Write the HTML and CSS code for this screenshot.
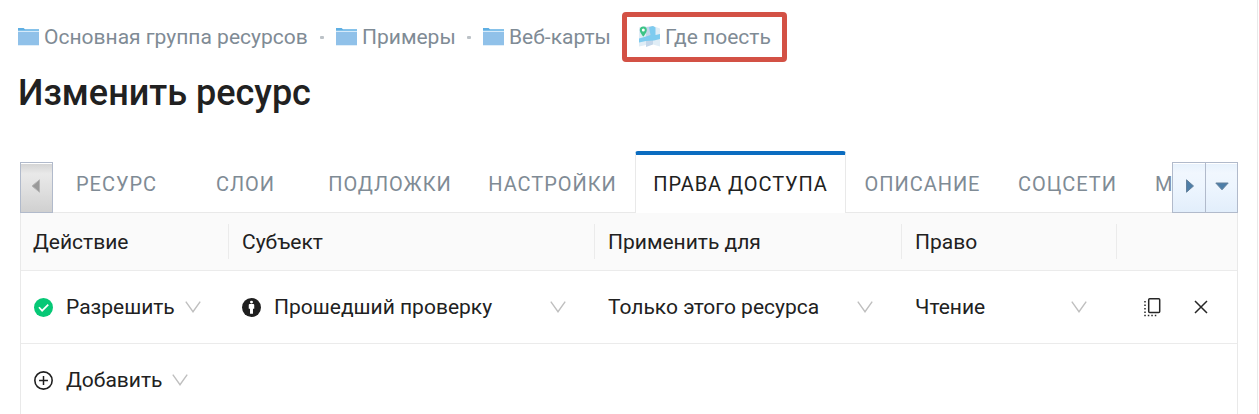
FILE: index.html
```html
<!DOCTYPE html>
<html lang="ru">
<head>
<meta charset="utf-8">
<title>Изменить ресурс</title>
<link rel="stylesheet" href="styles.css">
</head>
<body>
<svg class="defs" width="0" height="0">
  <symbol id="folder" viewBox="0 0 21 18">
    <path fill="#5fafe3" d="M0 0h5.6l1.4 1.2H21V6H0z"/>
    <path fill="#d5eafa" d="M0 2.7h21v1.4H0z"/>
    <path fill="#90c1e9" d="M0 4h21v13H0z"/>
    <path fill="#d3e7f7" d="M0 17h21v.7H0z"/>
  </symbol>
  <symbol id="chevron" viewBox="0 0 16 12">
    <path d="M.8.7 8 10.7 15.2.7" fill="none" stroke="#bfbfbf" stroke-width="1.4"/>
  </symbol>
</svg>
<div class="page">
  <nav class="crumbs">
    <a class="crumb crumb-root"><svg class="folder"><use href="#folder"/></svg><span>Основная группа ресурсов</span></a>
    <i class="dot"></i>
    <a class="crumb crumb-examples"><svg class="folder"><use href="#folder"/></svg><span>Примеры</span></a>
    <i class="dot"></i>
    <a class="crumb crumb-maps"><svg class="folder"><use href="#folder"/></svg><span>Веб-карты</span></a>
    <a class="crumb crumb-current">
      <svg class="map" viewBox="0 0 21 21">
        <path fill="#e0edf6" d="M0 1.500 7 0v19L0 20.500zM14 0l7 2.500v18L14 18.500z"/>
        <path fill="#c3d6e9" d="M7 1l7-1v18.500L7 21z"/>
        <path fill="#7ecbef" d="M10 1.200 14 0l2.500 1.500V9l4.500-1v5l-6 1.500-8 .5-7 1.500V12.500l7-2 4.500-1.500z"/>
        <path fill="#3cc485" d="M4.300.4A3.500 3.500 0 0 0 .8 3.900C.8 6.600 4.300 10.500 4.300 10.500S7.800 6.600 7.800 3.900A3.500 3.500 0 0 0 4.300.4z"/>
        <circle cx="4.300" cy="3.900" r="1.500" fill="#fff"/>
      </svg><span>Где поесть</span>
    </a>
  </nav>
  <h1 class="title">Изменить ресурс</h1>
  <div class="tabbar">
    <button class="scroll scroll-left" aria-label="Назад"><svg width="10" height="14" viewBox="0 0 10 14"><path fill="#999" stroke="#b4b4b4" d="M8.500.8v12.400L1 7z"/></svg></button>
    <div class="tabs">
      <div class="tab">РЕСУРС</div>
      <div class="tab">СЛОИ</div>
      <div class="tab tab-layers">ПОДЛОЖКИ</div>
      <div class="tab tab-settings">НАСТРОЙКИ</div>
      <div class="tab active">ПРАВА ДОСТУПА</div>
      <div class="tab tab-desc">ОПИСАНИЕ</div>
      <div class="tab tab-social">СОЦСЕТИ</div>
      <div class="tab tab-more">М</div>
    </div>
    <button class="scroll" aria-label="Вперёд"><svg width="10" height="14" viewBox="0 0 10 14"><path fill="#4d7ea8" stroke="#64809b" d="M1.500.8v12.400L8.500 7z"/></svg></button>
    <button class="scroll scroll-menu" aria-label="Список"><svg width="14" height="9" viewBox="0 0 14 9"><path fill="#4d7ea8" stroke="#64809b" d="M.8 1h12.400L7 7.800z"/></svg></button>
  </div>
  <div class="table">
    <div class="row head">
      <div class="cell">Действие</div>
      <div class="cell">Субъект</div>
      <div class="cell">Применить для</div>
      <div class="cell">Право</div>
      <div class="cell"></div>
    </div>
    <div class="row">
      <div class="cell">
        <svg class="icon" viewBox="0 0 18 18"><circle cx="9" cy="9" r="9" fill="#06c876"/><path d="m4.700 8.800 3 3.200 5.800-5.800" fill="none" stroke="#fff" stroke-width="1.600"/></svg>
        <span>Разрешить</span><svg class="chev chev-near"><use href="#chevron"/></svg>
      </div>
      <div class="cell">
        <svg class="icon" viewBox="0 0 18 18"><circle cx="9" cy="9" r="9" fill="#1f1f1f"/><circle cx="9" cy="3.900" r="1.400" fill="#fff"/><path fill="#fff" d="M7.300 5.800h3.400q.9 0 .9.900v3.600h-1.200v4.700H7.600v-4.700H6.400V6.700q0-.9.900-.9z"/></svg>
        <span>Прошедший проверку</span><svg class="chev"><use href="#chevron"/></svg>
      </div>
      <div class="cell"><span>Только этого ресурса</span><svg class="chev"><use href="#chevron"/></svg></div>
      <div class="cell"><span>Чтение</span><svg class="chev chev-right"><use href="#chevron"/></svg></div>
      <div class="cell actions">
        <svg width="17" height="19" viewBox="0 0 17 19"><rect x="4.700" y=".8" width="11" height="13.800" rx="1" fill="none" stroke="#262626" stroke-width="1.500"/><path d="M1 3v15M.3 17.500h13" fill="none" stroke="#262626" stroke-width="1.500" stroke-dasharray="1.500 2"/></svg>
        <svg width="14" height="14" viewBox="0 0 14 14"><path d="m1 1 12 12M13 1 1 13" stroke="#262626" stroke-width="1.500"/></svg>
      </div>
    </div>
    <div class="row last">
      <div class="cell">
        <svg class="icon" viewBox="0 0 18 18"><circle cx="9" cy="9" r="8.200" fill="none" stroke="#1f1f1f" stroke-width="1.500"/><path d="M9 4.800v8.400M4.800 9h8.400" stroke="#1f1f1f" stroke-width="1.400"/></svg>
        <span>Добавить</span><svg class="chev chev-near"><use href="#chevron"/></svg>
      </div>
    </div>
  </div>
</div>
</body>
</html>
```
FILE: styles.css
```css
* { box-sizing: border-box; }
body {
  margin: 0;
  background: #fff;
  color: #212121;
  font: 21px/30px Roboto, "Noto Sans", sans-serif;
}
.defs { display: block; height: 0; }
.page {
  width: 1258px;
  height: 414px;
  overflow: hidden;
  padding: 12px 19px 0 20px;
  border-right: 1px solid #e9e9e9;
}
.crumbs {
  display: flex;
  align-items: center;
  height: 50px;
  margin-left: -2px;
  color: #7f8b95;
}
.crumb { display: flex; align-items: center; gap: 5px; white-space: nowrap; }
.crumb-root { width: 302px; }
.crumb-examples { width: 131px; }
.crumb-maps { width: 139px; }
.folder { width: 21px; height: 18px; }
.map { width: 21px; height: 21px; margin-top: -2px; }
.dot { width: 4px; height: 3px; margin-right: 12px; border-radius: 1px; background: #bcc2c7; }
.crumb-current {
  width: 165px;
  height: 50px;
  padding-left: 12px;
  border: 5px solid #d35145;
  border-radius: 4px;
}
.title { margin: 10px 0 0 -2px; font-size: 36px; line-height: 42px; font-weight: 500; }
.tabbar {
  display: flex;
  align-items: flex-end;
  height: 62px;
  margin-top: 37px;
}
.scroll {
  display: grid;
  place-items: center;
  flex: none;
  width: 34px;
  height: 51px;
  padding: 0 0 3px 1px;
  border: 1px solid #b1bacb;
  background: linear-gradient(#e6f1fc 0, #f1f7fe 20%, #edf5fe 50%, #e2eefb);
  box-shadow: inset 0 1px #fff;
}
.scroll-left { width: 33px; padding: 0 1px 3px 0; background: linear-gradient(#d2d2d2 0, #e9e9e9 22%, #e1e1e1 50%, #d0d0d0); }
.scroll-menu { width: 33px; margin-left: -1px; }
.tabs {
  display: flex;
  flex: 1;
  height: 62px;
  min-width: 0;
  overflow: hidden;
}
.tab {
  flex: none;
  width: 129px;
  padding-top: 4px;
  border-bottom: 1px solid #e9e9e9;
  color: #7f8b95;
  font-size: 20px;
  line-height: 58px;
  letter-spacing: 0.95px;
  text-align: center;
  white-space: nowrap;
}
.tab:first-child { margin-left: -1px; }
.tab-layers { width: 160px; }
.tab-settings { width: 165px; }
.tab-desc { width: 153px; }
.tab-social { width: 137px; }
.tab-more { width: 40px; padding-left: 19px; text-align: left; }
.tab.active {
  width: 211px;
  padding-top: 0;
  border: 1px solid #e9e9e9;
  border-top: 4px solid #0b6cc0;
  border-bottom: 0;
  border-radius: 3px 3px 0 0;
  color: #212121;
}
.table { border: solid #e9e9e9; border-width: 0 1px; }
.row {
  display: grid;
  grid-template-columns: 207px 366px 307px 215px 1fr;
  height: 73px;
  border-bottom: 1px solid #ebebeb;
}
.cell { display: flex; align-items: center; min-width: 0; padding-left: 14px; white-space: nowrap; }
.cell:first-child { padding-left: 13px; }
.head { height: 58px; align-items: center; background: #fafafa; }
.head .cell { height: 35px; padding-left: 13px; }
.head .cell:first-child { padding-left: 12px; }
.head .cell + .cell { border-left: 1px solid #ebebeb; }
.icon { width: 19px; height: 19px; margin-right: 13px; flex: none; }
.chev { width: 16px; height: 12px; margin-left: auto; margin-right: 28px; flex: none; }
.chev-right { margin-right: 29px; }
.chev-near { margin: 0 0 0 10px; }
.actions { padding-left: 28px; gap: 33px; }
.last { height: 72px; border-bottom: 0; }
```
